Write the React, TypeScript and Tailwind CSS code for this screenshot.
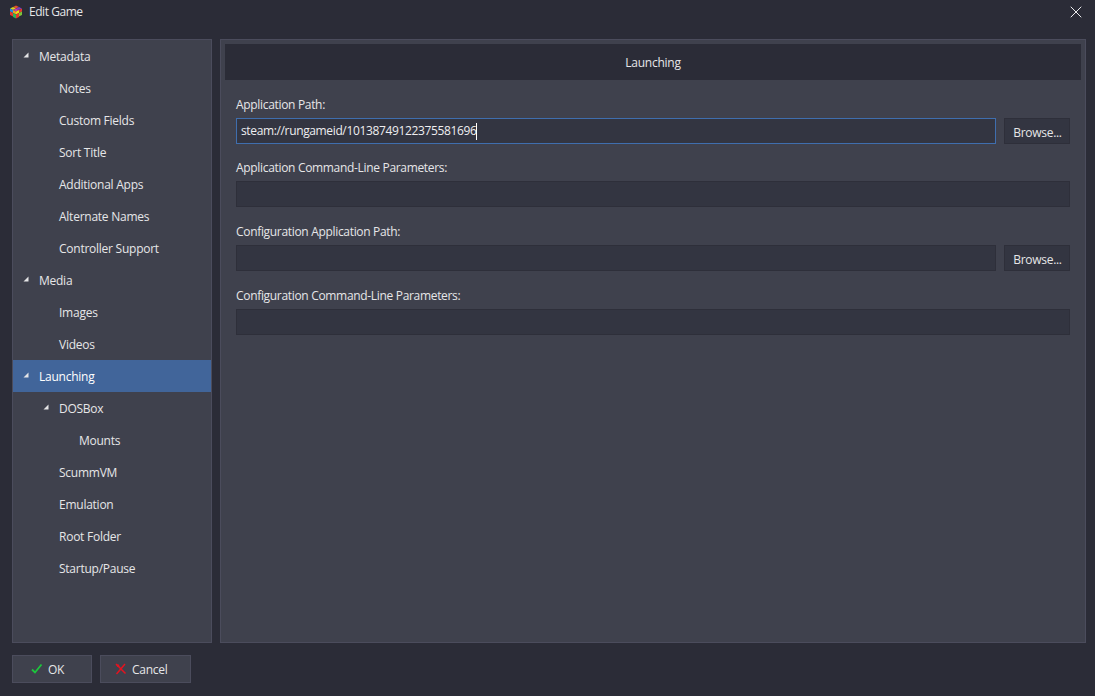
import { X } from 'lucide-react';

const treeItems = [
  { label: 'Metadata', level: 0, arrow: true },
  { label: 'Notes', level: 1 },
  { label: 'Custom Fields', level: 1 },
  { label: 'Sort Title', level: 1 },
  { label: 'Additional Apps', level: 1 },
  { label: 'Alternate Names', level: 1 },
  { label: 'Controller Support', level: 1 },
  { label: 'Media', level: 0, arrow: true },
  { label: 'Images', level: 1 },
  { label: 'Videos', level: 1 },
  { label: 'Launching', level: 0, arrow: true, selected: true },
  { label: 'DOSBox', level: 1, arrow: true },
  { label: 'Mounts', level: 2 },
  { label: 'ScummVM', level: 1 },
  { label: 'Emulation', level: 1 },
  { label: 'Root Folder', level: 1 },
  { label: 'Startup/Pause', level: 1 },
];

const levelPadding = ['pl-[26px]', 'pl-[46px]', 'pl-[66px]'];
const arrowPlace = ['left-[10px]', 'left-[30px]', 'left-[50px]'];

// colourful cube, left face / right face / top
const Logo = () => (
  <svg width="14" height="14" viewBox="0 0 14 14" className="shrink-0">
    <path d="M7 0.5 L13 3.5 L13 10.5 L7 13.5 L1 10.5 L1 3.5 Z" fill="#23242c" />
    <path d="M7 0.5 L10 2 L7 3.5 L4 2 Z" fill="#e0522a" />
    <path d="M10 2 L13 3.5 L10 5 L7 3.5 Z" fill="#7a3fc0" />
    <path d="M4 2 L7 3.5 L4 5 L1 3.5 Z" fill="#d8d020" />
    <path d="M7 3.5 L10 5 L7 6.5 L4 5 Z" fill="#c43bb0" />
    <path d="M1 3.5 L4 5 L4 8 L1 6.5 Z" fill="#1f8fe0" />
    <path d="M4 5 L7 6.5 L7 9.5 L4 8 Z" fill="#f0a020" />
    <path d="M1 6.5 L4 8 L4 11.5 L1 10 Z" fill="#e8392b" />
    <path d="M4 8 L7 9.5 L7 13.5 L4 12 Z" fill="#2fb457" />
    <path d="M7 6.5 L10 5 L10 8 L7 9.5 Z" fill="#e6dc1c" />
    <path d="M10 5 L13 3.5 L13 6.5 L10 8 Z" fill="#e8392b" />
    <path d="M7 9.5 L10 8 L10 12 L7 13.5 Z" fill="#e8392b" />
    <path d="M10 8 L13 6.5 L13 10 L10 11.5 Z" fill="#7cc23a" />
  </svg>
);

const TreeRow = ({ label, level, arrow, selected }: { label: string; level: number; arrow?: boolean; selected?: boolean }) => (
  <div className={`relative flex h-8 items-center pt-[2px] ${levelPadding[level]} ${selected ? 'bg-[#41659a] text-white' : 'text-[#e6e6e8]'}`}>
    {arrow && (
      <svg width="6" height="6" viewBox="0 0 6 6" className={`absolute top-[12px] ${arrowPlace[level]}`}>
        <path d="M5.5 0.5 L5.5 5.5 L0.5 5.5 Z" fill="#e4e4e6" />
      </svg>
    )}
    {label}
  </div>
);

const Field = ({ label, value, browse, focused, className }: { label: string; value?: string; browse?: boolean; focused?: boolean; className: string }) => (
  <div className={className}>
    <div className="h-[17px] pt-px leading-[17px] tracking-[-0.32px] text-[#e6e6e8]">{label}</div>
    <div className="mt-[6px] flex gap-2">
      <div className={`flex h-[26px] flex-1 items-center border pl-1 tracking-[-0.36px] text-[#eeeef0] ${focused ? 'border-[#3f6eae]' : 'border-[#2e2f3a]'} bg-[#333541]`}>
        {value}
        {focused && <span className="h-[17px] w-px bg-white" />}
      </div>
      {browse && (
        <div className="flex h-[26px] w-[66px] items-center justify-center border border-[#2e2f3a] bg-[#333541] pl-px pt-[3px] tracking-[-0.3px] text-[#e6e6e8]">
          Browse...
        </div>
      )}
    </div>
  </div>
);

export default function App() {
  return (
    <div className="flex h-[696px] w-[1095px] flex-col overflow-hidden bg-[#2b2c37] text-[12px] tracking-[-0.25px] font-['Open_Sans','Noto_Sans',sans-serif]">
      <div className="flex h-[39px] shrink-0 items-start pl-[9px] pr-[9px] pt-[5px] text-[#e6e6e8]">
        <Logo />
        <span className="ml-[6px] leading-[14px] tracking-[-0.45px]">Edit Game</span>
        <X className="-mt-[3px] ml-auto text-[#ececee]" size={20} strokeWidth={1.2} />
      </div>

      <div className="flex h-[604px] shrink-0 gap-2 pl-3 pr-[9px]">
        <div className="w-[200px] border border-[#4b4c5c] bg-[#3f414d]">
          {treeItems.map((item) => (
            <TreeRow key={item.label} {...item} />
          ))}
        </div>
        <div className="flex-1 border border-[#4b4c5c] bg-[#3f414d] p-1">
          <div className="flex h-9 items-center justify-center bg-[#2b2c37] pt-[2px] text-[#e6e6e8]">Launching</div>
          <div className="px-[11px]">
            <Field className="mt-[15px]" label="Application Path:" value="steam://rungameid/10138749122375581696" browse focused />
            <Field className="mt-[14px]" label="Application Command-Line Parameters:" />
            <Field className="mt-[15px]" label="Configuration Application Path:" browse />
            <Field className="mt-[15px]" label="Configuration Command-Line Parameters:" />
          </div>
        </div>
      </div>

      <div className="flex gap-2 pl-3 pt-3">
        <div className="flex h-[28px] w-[80px] items-center border border-[#4b4c5c] bg-[#3f414d] pl-[18px] text-[#e6e6e8]">
          <svg width="12" height="12" viewBox="0 0 12 12" className="shrink-0">
            <path d="M1 6.5 L4 9.5 L10.5 1.5" fill="none" stroke="#1cc63c" strokeWidth="1.8" />
          </svg>
          <span className="ml-[5px] pt-[2px]">OK</span>
        </div>
        <div className="flex h-[28px] w-[91px] items-center border border-[#4b4c5c] bg-[#3f414d] pl-[14px] text-[#e6e6e8]">
          <svg width="12" height="12" viewBox="0 0 12 12" className="shrink-0">
            <path d="M1 1 L10.5 10.5 M10 1 L1.5 11" fill="none" stroke="#e3131f" strokeWidth="1.5" />
            <path d="M1 1.5 L4 1.5 L4.5 4 L2.5 4 Z" fill="#e3131f" />
          </svg>
          <span className="ml-[5px] pt-[2px]">Cancel</span>
        </div>
      </div>
    </div>
  );
}
